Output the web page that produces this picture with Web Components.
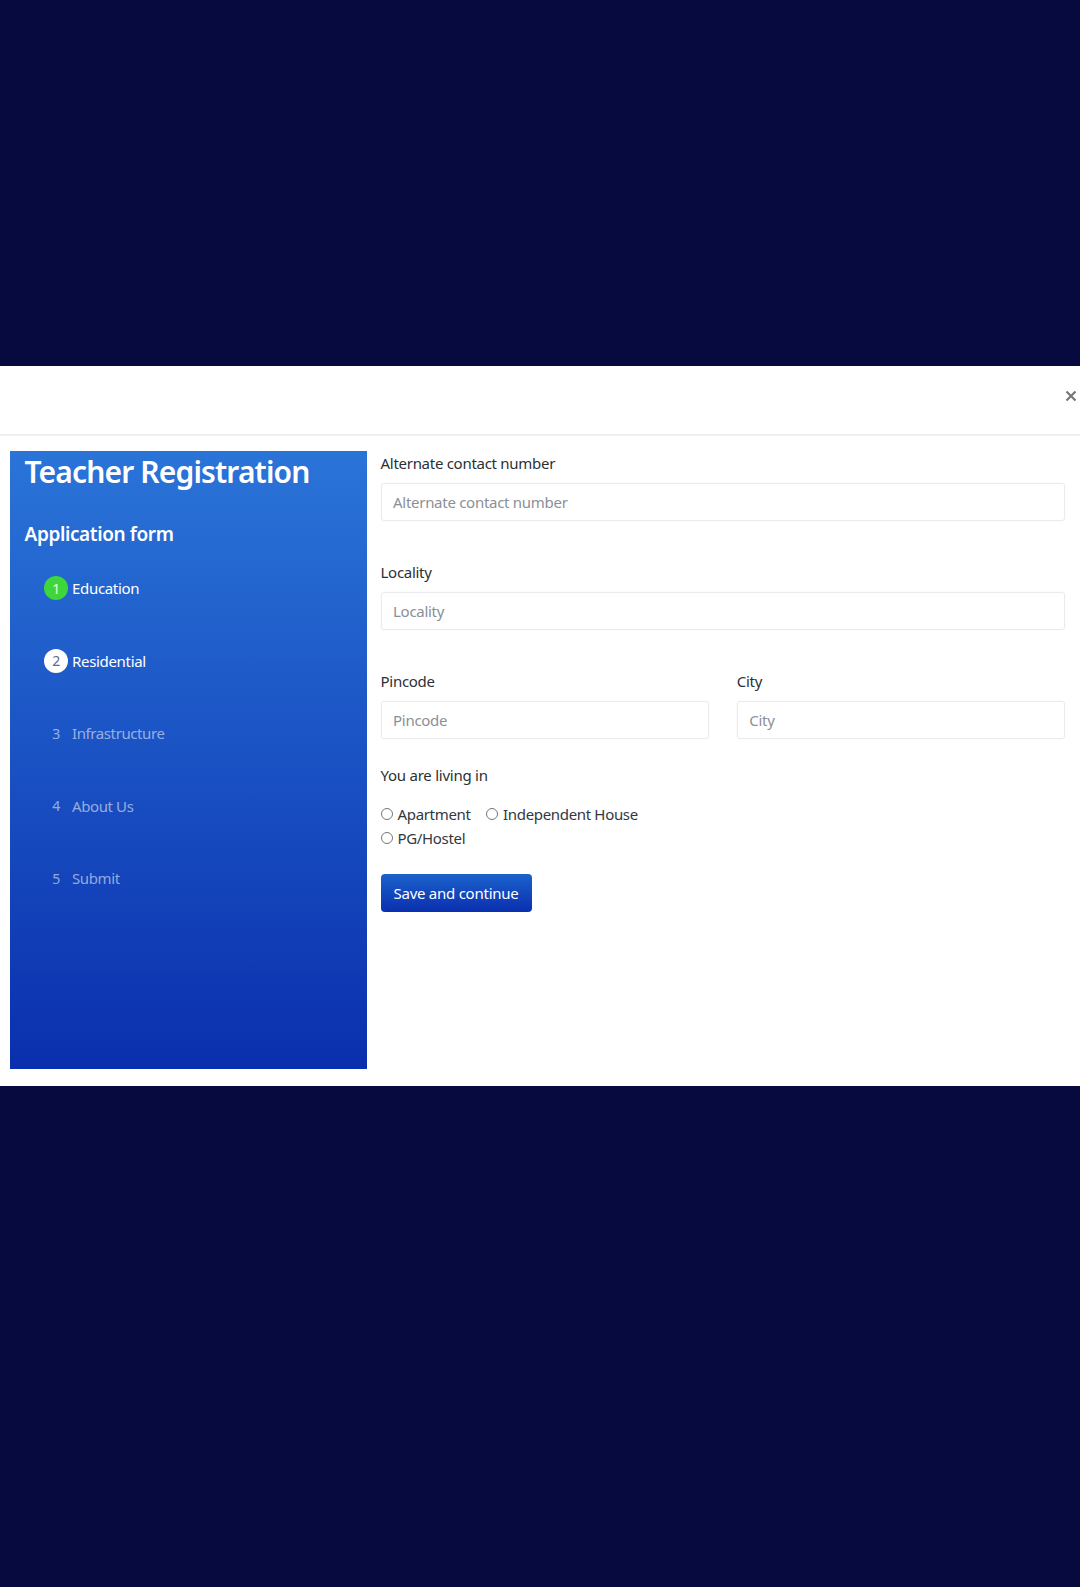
<!DOCTYPE html>
<html lang="en">
<head>
<meta charset="UTF-8">
<title>Teacher Registration</title>
<style>
  html, body { margin: 0; height: 100%; background: #070a3f; }
  body { font-family: "Noto Sans", "Open Sans", sans-serif; }
</style>
</head>
<body>
<reg-modal>
  <reg-sidebar slot="side" title="Teacher Registration" sub="Application form">
    <reg-step num="1" state="done">Education</reg-step>
    <reg-step num="2" state="active">Residential</reg-step>
    <reg-step num="3">Infrastructure</reg-step>
    <reg-step num="4">About Us</reg-step>
    <reg-step num="5">Submit</reg-step>
  </reg-sidebar>
  <reg-form slot="main"></reg-form>
</reg-modal>

<script>
class RegModal extends HTMLElement {
    constructor() {
        super();
        this.attachShadow({ mode: "open" });
        this.shadowRoot.innerHTML = `
            <style>
                :host { display: block; padding-top: 366px; }
                .modal { background: #fff; height: 720px; display: flex; flex-direction: column; box-sizing: border-box; }
                .head { height: 70px; flex: none; box-sizing: border-box; border-bottom: 2px solid #eeeff1; display: flex; justify-content: flex-end; align-items: flex-start; padding: 16px 2px 0 0; }
                .close { color: #777; width: 14px; height: 14px; margin-top: 7px; }
                .close svg { display: block; }
                .body { flex: 1; display: flex; padding: 15px 15px 17px 10px; gap: 14px; min-height: 0; }
            </style>
            <div class="modal">
                <div class="head">
                    <div class="close" aria-label="Close"><svg width="14" height="14" viewBox="0 0 14 14"><path d="M2.5 2.5l9 9M11.5 2.5l-9 9" stroke="#777" stroke-width="2.2" fill="none"/></svg></div>
                </div>
                <div class="body">
                    <slot name="side"></slot>
                    <slot name="main"></slot>
                </div>
            </div>
        `;
    }
}
customElements.define("reg-modal", RegModal);

class RegSidebar extends HTMLElement {
    constructor() {
        super();
        this.attachShadow({ mode: "open" });
        this.shadowRoot.innerHTML = `
            <style>
                :host { display: block; width: 356.5px; flex: none; color: #fff; background: linear-gradient(#2a74d8, #0a2fae); box-sizing: border-box; padding: 0 14.5px; }
                h1 { margin: 0; font-size: 30px; line-height: 42px; font-weight: 600; letter-spacing: -.85px; }
                h2 { margin: 26px 0 0; font-size: 19px; line-height: 30px; font-weight: 600; letter-spacing: -.38px; }
                .steps { display: flex; flex-direction: column; gap: 48.6px; margin: 27px 0 0 19.5px; }
            </style>
            <h1></h1>
            <h2></h2>
            <div class="steps"><slot></slot></div>
        `;
    }

    connectedCallback() {
        this.shadowRoot.querySelector("h1").textContent = this.getAttribute("title");
        this.shadowRoot.querySelector("h2").textContent = this.getAttribute("sub");
    }
}
customElements.define("reg-sidebar", RegSidebar);

class RegStep extends HTMLElement {
    constructor() {
        super();
        this.attachShadow({ mode: "open" });
        this.shadowRoot.innerHTML = `
            <style>
                :host { display: flex; align-items: center; gap: 4px; height: 24px; font-size: 15px; color: rgba(255,255,255,.55); letter-spacing: -.4px; }
                :host([state]) { color: #fff; letter-spacing: -.32px; }
                .num { width: 24px; height: 24px; border-radius: 50%; display: flex; align-items: center; justify-content: center; font-size: 14px; }
                :host([state="done"]) .num { background: #3fd63c; color: #e8ffe8; }
                :host([state="active"]) .num { background: #fff; color: #5a6a8c; }
            </style>
            <span class="num"></span><slot></slot>
        `;
    }

    connectedCallback() {
        this.shadowRoot.querySelector(".num").textContent = this.getAttribute("num");
    }
}
customElements.define("reg-step", RegStep);

class RegField extends HTMLElement {
    constructor() {
        super();
        this.attachShadow({ mode: "open" });
        this.shadowRoot.innerHTML = `
            <style>
                :host { display: block; flex: 1; min-width: 0; }
                label { display: block; font-size: 15px; line-height: 24px; color: #2b3036; letter-spacing: -.28px; }
                .box { margin-top: 8px; height: 38px; box-sizing: border-box; border: 1px solid #e9ebed; border-radius: 3px; padding: 0 11.5px; display: flex; align-items: center; font-size: 15px; color: #8a9097; letter-spacing: -.28px; box-shadow: 0 0 2px rgba(0,0,0,.06); }
            </style>
            <label></label>
            <div class="box"></div>
        `;
    }

    connectedCallback() {
        const name = this.getAttribute("name");
        this.shadowRoot.querySelector("label").textContent = name;
        this.shadowRoot.querySelector(".box").textContent = name;
    }
}
customElements.define("reg-field", RegField);

class RegRadio extends HTMLElement {
    constructor() {
        super();
        this.attachShadow({ mode: "open" });
        this.shadowRoot.innerHTML = `
            <style>
                :host { display: inline-flex; align-items: center; font-size: 15px; line-height: 24px; color: #33383e; letter-spacing: -.33px; margin-right: 15.5px; }
                input { appearance: none; width: 12px; height: 12px; margin: 0 5px 1px 0; border: 1px solid #777; border-radius: 50%; background: #fff; }
            </style>
            <input type="radio" name="living"><slot></slot>
        `;
    }
}
customElements.define("reg-radio", RegRadio);

class RegButton extends HTMLElement {
    constructor() {
        super();
        this.attachShadow({ mode: "open" });
        this.shadowRoot.innerHTML = `
            <style>
                :host { display: inline-block; }
                button { height: 38px; width: 151px; padding: 0; border: 0; border-radius: 4px; color: #fff; font: inherit; font-size: 15px; letter-spacing: -.25px; background: linear-gradient(#1b62cc, #0a2fae); }
            </style>
            <button><slot></slot></button>
        `;
    }
}
customElements.define("reg-button", RegButton);

class RegForm extends HTMLElement {
    constructor() {
        super();
        this.attachShadow({ mode: "open" });
        this.shadowRoot.innerHTML = `
            <style>
                :host { display: flex; flex-direction: column; flex: 1; min-width: 0; }
                .stack { display: flex; flex-direction: column; gap: 39px; }
                .row { display: flex; gap: 28px; }
                .q { font-size: 15px; line-height: 24px; color: #2b3036; letter-spacing: -.25px; margin-top: 24px; }
                .opts { margin-top: 15px; width: 300px; }
                .opts div { display: flex; height: 24px; }
                .act { margin-top: 24px; }
            </style>
            <div class="stack">
                <reg-field name="Alternate contact number"></reg-field>
                <reg-field name="Locality"></reg-field>
                <div class="row">
                    <reg-field name="Pincode"></reg-field>
                    <reg-field name="City"></reg-field>
                </div>
            </div>
            <div class="q">You are living in</div>
            <div class="opts">
                <div><reg-radio>Apartment</reg-radio><reg-radio>Independent House</reg-radio></div>
                <div><reg-radio>PG/Hostel</reg-radio></div>
            </div>
            <div class="act"><reg-button>Save and continue</reg-button></div>
        `;
    }
}
customElements.define("reg-form", RegForm);
</script>
</body>
</html>
